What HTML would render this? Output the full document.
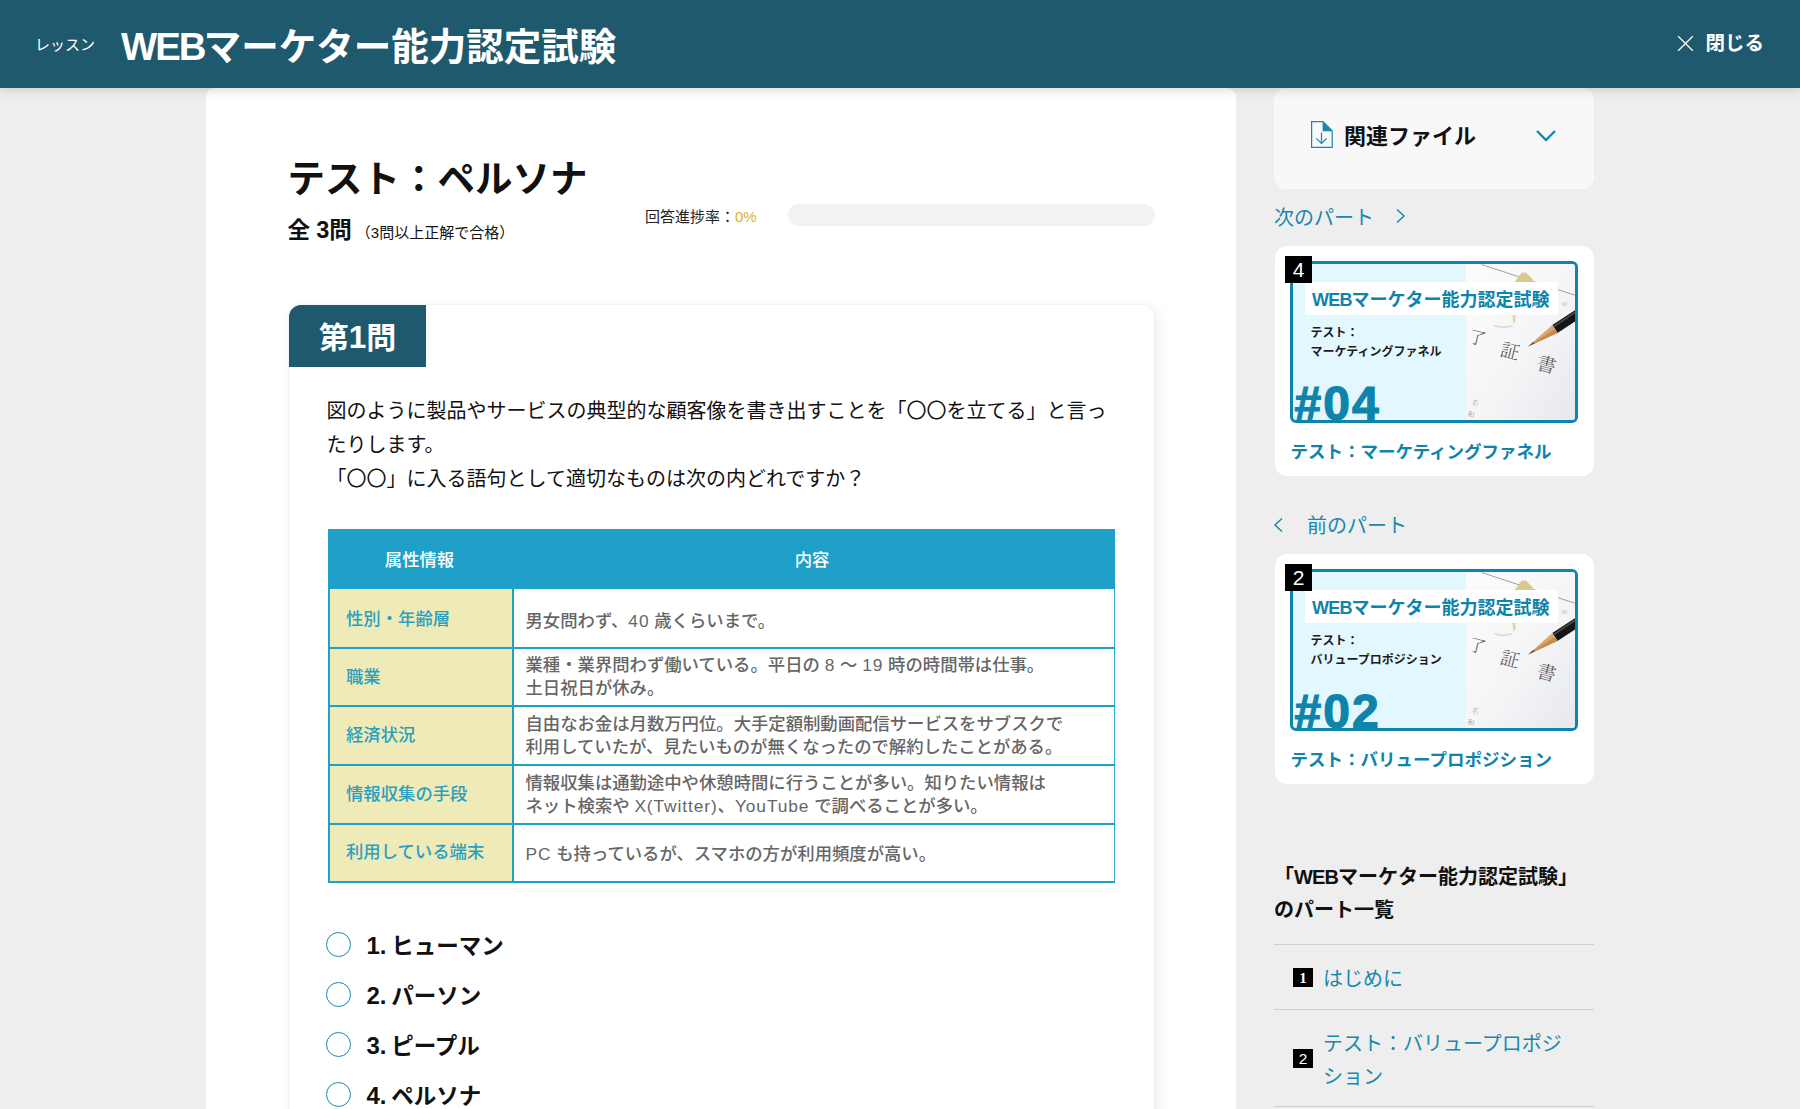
<!DOCTYPE html>
<html lang="ja">
<head>
<meta charset="utf-8">
<title>WEBマーケター能力認定試験</title>
<style>
*{box-sizing:border-box;margin:0;padding:0}
html,body{width:1800px;height:1109px;overflow:hidden}
body{background:#eeeeee;font-family:"Liberation Sans","Noto Sans CJK JP",sans-serif;color:#111;position:relative}
.abs{position:absolute}
/* header */
#hdr{position:absolute;left:0;top:0;width:1800px;height:88px;background:#1f596d;box-shadow:0 2px 10px rgba(0,0,0,.15);z-index:10}
#hdr .les{position:absolute;left:35px;top:34px;font-size:15px;line-height:22px;color:#fff}
#hdr .ttl{position:absolute;left:121px;top:19px;font-size:37.5px;line-height:56px;font-weight:700;color:#fff;white-space:nowrap}
#hdr .cls{position:absolute;left:1705.5px;top:28.5px;font-size:19.5px;line-height:28px;font-weight:700;color:#fff;white-space:nowrap}
#hdr svg.x{position:absolute;left:1677px;top:35px}
#hdr .web{font-size:38.4px;letter-spacing:-2px;margin-right:-.9px}
/* main card */
#main{position:absolute;left:206px;top:88px;width:1030px;height:1100px;background:#fff;border-radius:9px 9px 0 0}
#main h1{position:absolute;left:81.5px;top:62px;font-size:37.5px;line-height:58px;font-weight:700;color:#111;white-space:nowrap}
#main .cnt{position:absolute;left:81.5px;top:125px;font-size:22.5px;line-height:36px;font-weight:700;white-space:nowrap}
#main .cnt b.n{font-size:23.5px;line-height:0}
#main .cnt small{font-size:15px;font-weight:400;margin-left:4px;position:relative;top:-.5px}
#main .prog{position:absolute;left:439px;top:118px;font-size:15px;line-height:22px;white-space:nowrap;color:#222}
#main .prog b{font-weight:400;color:#e2b01f}
#main .bar{position:absolute;left:582px;top:116px;width:367px;height:22px;border-radius:11px;background:#f3f1f1}
/* question */
#q{position:absolute;left:83px;top:217px;width:865px;height:900px;background:#fff;border-radius:12px 12px 0 0;box-shadow:3px 3px 14px rgba(0,0,0,.09),0 0 0 1px rgba(0,0,0,.02)}
#q .lab{position:absolute;left:0;top:0;width:137px;height:62px;background:#1f596d;border-radius:12px 0 0 0;color:#fff;font-weight:700;font-size:30px;line-height:66px;text-align:center}
#q .txt{position:absolute;left:37.5px;top:88.5px;width:790px;font-size:20px;line-height:34px;color:#111}
#q .opt{position:absolute;left:37px;font-size:22.5px;line-height:36px;font-weight:700;white-space:nowrap}
#q .opt i{position:absolute;left:0;top:5px;width:25px;height:25px;border:1.4px solid #1888ad;border-radius:50%}
#q .opt b.n{font-size:24px;line-height:0}
#q .opt span{margin-left:40.5px;position:relative;top:1.5px;word-spacing:-1.6px}
/* table */
#tb{position:absolute;left:39px;top:224px;width:787px;height:354px;background:#fff}
#tb .h{position:absolute;left:0;top:0;width:787px;height:60px;background:#1fa0c8;color:#fff;font-weight:500;font-size:17.35px;line-height:63px}
#tb .r{position:absolute;left:0;width:787px;border-bottom:2px solid #1fa0c8;border-left:2px solid #1fa0c8;border-right:1.5px solid #3aabd0}
#tb .c1{position:absolute;left:0;top:0;width:184px;height:100%;background:#eeebb8;color:#2a9fc0;font-weight:500;font-size:17.35px;padding-left:16px;padding-bottom:2px;border-right:2px solid #1fa0c8;display:flex;align-items:center;white-space:nowrap}
#tb .c2 u{text-decoration:none;letter-spacing:.9px}
#tb .c2{position:absolute;left:184px;top:0;width:599px;height:100%;color:#666;font-weight:500;font-size:17.35px;line-height:23px;padding-left:11.5px;display:flex;align-items:center;white-space:nowrap}
/* sidebar */
#side{position:absolute;left:1274px;top:88px;width:320px}
.teal{color:#1888ad}

#rel{position:absolute;left:0;top:0;width:320px;height:100.5px;background:#f8f8f8;border-radius:12px}
#rel .t{position:absolute;left:70px;top:32px;font-size:22px;line-height:34px;font-weight:700;color:#111;white-space:nowrap}
#rel svg.f{position:absolute;left:36px;top:32px}
#rel svg.c{position:absolute;left:261px;top:40.5px}
.nav{position:absolute;left:0;font-size:20px;line-height:30px;color:#1888ad;white-space:nowrap}
.nav svg{position:absolute;top:8px}
.card{position:absolute;left:.5px;width:319px;height:230px;background:#fff;border-radius:12px}
.card .th{position:absolute;left:15.5px;top:15px;width:288px;height:162px;border:3px solid #0f84ab;border-radius:6px;overflow:hidden;background:#e3f7ff}
.card .th svg.ph{position:absolute;left:173px;top:0}
.card .th .wl{position:absolute;left:12px;top:17.5px;width:252.5px;height:33px;background:#fff;color:#0f84ab;font-weight:700;font-size:18px;line-height:36.5px;padding-left:7px;overflow:hidden;white-space:nowrap}
.card .th .wl span{letter-spacing:-.8px}
.card .th .sub{position:absolute;left:17.5px;top:59.5px;font-size:12px;line-height:19px;font-weight:700;color:#1c1c1c;white-space:nowrap}
.card .th .no{position:absolute;left:1.5px;top:110.4px;font-size:48px;line-height:60px;font-weight:700;color:#0f84ab;white-space:nowrap;letter-spacing:2px;-webkit-text-stroke:1.2px #0f84ab}
.card .bd{position:absolute;left:10.5px;top:10px;width:27px;height:27px;background:#000;color:#fff;font-size:21px;line-height:28.5px;text-align:center;font-weight:400}
.card .nm{position:absolute;left:16px;top:192px;font-size:17.5px;line-height:28px;font-weight:700;color:#0f84ab;white-space:nowrap}
#lst h3{position:absolute;left:0;top:773px;width:320px;font-size:20px;line-height:33px;font-weight:700;color:#111;white-space:nowrap}
#lst h3 span{letter-spacing:-.9px}
#lst .hr{position:absolute;left:0;width:320px;height:1px;background:#d0d0d0}
#lst .b{position:absolute;left:19px;width:20px;height:19.5px;background:#000;color:#fff;font-size:15px;line-height:20px;text-align:center;font-weight:700;font-family:"Liberation Serif","Noto Sans CJK JP",serif}
#lst .l{position:absolute;left:49px;width:250px;font-size:20px;line-height:33px;color:#1888ad}
</style>
</head>
<body>
<div id="hdr">
  <div class="les">レッスン</div>
  <div class="ttl"><span class="web">WEB</span>マーケター能力認定試験</div>
  <svg class="x" width="17" height="17" viewBox="0 0 17 17"><path d="M1.2 1.2L15.8 15.8M15.8 1.2L1.2 15.8" stroke="#fff" stroke-width="1.3" fill="none"/></svg>
  <div class="cls">閉じる</div>
</div>

<div id="main">
  <h1>テスト：ペルソナ</h1>
  <div class="cnt">全 <b class="n">3</b>問<small>（3問以上正解で合格）</small></div>
  <div class="prog">回答進捗率：<b>0%</b></div>
  <div class="bar"></div>

  <div id="q">
    <div class="lab">第<b style="font-size:31.5px;line-height:0">1</b>問</div>
    <div class="txt">図のように製品やサービスの典型的な顧客像を書き出すことを「〇〇を立てる」と言ったりします。<br>「〇〇」に入る語句として適切なものは次の内どれですか？</div>

    <div id="tb">
      <div class="h"><div style="position:absolute;left:0;width:183px;text-align:center">属性情報</div><div style="position:absolute;left:183px;width:602px;text-align:center">内容</div></div>
      <div class="r" style="top:60px;height:60px"><div class="c1">性別・年齢層</div><div class="c2"><span style="position:relative;top:3px">男女問わず、<u>40</u> 歳くらいまで。</span></div></div>
      <div class="r" style="top:120px;height:58px"><div class="c1" style="padding-bottom:4px">職業</div><div class="c2"><span style="position:relative;top:0px">業種・業界問わず働いている。平日の <u>8</u> ～ <u>19</u> 時の時間帯は仕事。<br>土日祝日が休み。</span></div></div>
      <div class="r" style="top:178px;height:59px"><div class="c1" style="padding-bottom:4px">経済状況</div><div class="c2"><span style="position:relative;top:.5px">自由なお金は月数万円位。大手定額制動画配信サービスをサブスクで<br>利用していたが、見たいものが無くなったので解約したことがある。</span></div></div>
      <div class="r" style="top:237px;height:59px"><div class="c1" style="padding-bottom:4px">情報収集の手段</div><div class="c2"><span style="position:relative;top:.5px">情報収集は通勤途中や休憩時間に行うことが多い。知りたい情報は<br>ネット検索や <u>X(Twitter)</u>、<u>YouTube</u> で調べることが多い。</span></div></div>
      <div class="r" style="top:296px;height:58px"><div class="c1" style="padding-bottom:5px">利用している端末</div><div class="c2"><span style="position:relative;top:1px"><u>PC</u> も持っているが、スマホの方が利用頻度が高い。</span></div></div>
    </div>

    <div class="opt" style="top:622px"><i></i><span><b class="n">1.</b> ヒューマン</span></div>
    <div class="opt" style="top:672px"><i></i><span><b class="n">2.</b> パーソン</span></div>
    <div class="opt" style="top:722px"><i></i><span><b class="n">3.</b> ピープル</span></div>
    <div class="opt" style="top:772px"><i></i><span><b class="n">4.</b> ペルソナ</span></div>
  </div>
</div>

<div id="side">
  <div id="rel">
    <svg class="f" width="24" height="30" viewBox="0 0 24 30"><path d="M1.6 1.6H13L22.2 10.8V27.4H1.6Z" fill="none" stroke="#1888ad" stroke-width="1.2" stroke-linejoin="miter"/><path d="M12.6 1.2V11.2H22.6Z" fill="#1888ad"/><path d="M11.5 12.5V23.3M6.3 18.3L11.5 23.5L16.7 18.3" fill="none" stroke="#1888ad" stroke-width="1.2"/></svg>
    <div class="t">関連ファイル</div>
    <svg class="c" width="22" height="14" viewBox="0 0 22 14"><path d="M2 2L11 11L20 2" fill="none" stroke="#1888ad" stroke-width="2.4"/></svg>
  </div>

  <div class="nav" style="top:114.5px">次のパート<svg style="left:121px;top:5.5px" width="12" height="16" viewBox="0 0 12 16"><path d="M2 1.5L9 8L2 14.5" fill="none" stroke="#1888ad" stroke-width="1.5"/></svg></div>

  <div class="card" style="top:158px">
    <div class="th">
      <svg class="ph" width="110" height="156" viewBox="0 0 110 156">
        <linearGradient id="pg1" x1="0" y1="0" x2="1" y2="1"><stop offset="0" stop-color="#fcfcfc"/><stop offset=".55" stop-color="#f5f5f7"/><stop offset="1" stop-color="#e6e8ed"/></linearGradient>
        <rect width="110" height="156" fill="url(#pg1)"/>
        <path d="M15.6 .5L108.7 31.2" stroke="#8a8a8a" stroke-width=".8"/>
        <path d="M48.7 18L55.8 8.6L60 8.8L67 15.5V18Z" fill="#dcc88e"/>
        <path d="M26.6 50H49.5V57L46 62.5Q37 65.5 28.5 62.5Q26 58 26.6 50Z" fill="#f7f7f3"/>
        <path d="M28.5 62.5Q37 65.8 46 62.5L47 60.8Q37 63.6 27.8 60.8Z" fill="#dddcd6"/>
        <path d="M46.3 50H49.5V57L47.5 60Z" fill="#e3d3a2"/>
        <path d="M91.5 69L86.3 61L118.1 40.2L123.3 48.2Z" fill="#151515"/>
        <path d="M88.2 63.2L87.2 61.7L119 40.9L120 42.4Z" fill="#4a4a4a"/>
        <path d="M62.1 82.5L86.3 61L91.5 69Z" fill="#dca56c"/>
        <path d="M62.1 82.5L88.9 65L91.5 69Z" fill="#c68a52"/>
        <path d="M62.1 82.5L67.4 77.8L68.6 79.6Z" fill="#555"/>
        <g font-family="'Liberation Serif','Noto Serif CJK SC',serif" fill="#555" font-weight="300">
          <text x="11" y="80" font-size="17" text-anchor="middle" transform="rotate(14 11 75)">了</text>
          <text x="44" y="94" font-size="19" text-anchor="middle" transform="rotate(14 44 88)">証</text>
          <text x="80.6" y="107.5" font-size="19" text-anchor="middle" transform="rotate(14 80.6 101)">書</text>
          <text x="98.4" y="42" font-size="6" text-anchor="middle" fill="#9a9a9a" transform="rotate(14 98.4 40)">の</text>
          <text x="9.2" y="141.5" font-size="7" text-anchor="middle" fill="#8a8a8a" transform="rotate(14 9.2 139)">名</text>
          <text x="5" y="153" font-size="7" text-anchor="middle" fill="#8a8a8a" transform="rotate(14 5 150.5)">和</text>
        </g>
      </svg>
      <div class="wl"><span>WEB</span>マーケター能力認定試験</div>
      <div class="sub">テスト：<br>マーケティングファネル</div>
      <div class="no">#04</div>
    </div>
    <div class="bd">4</div>
    <div class="nm">テスト：マーケティングファネル</div>
  </div>

  <div class="nav" style="top:423px"><svg style="left:-1px;top:5.5px" width="12" height="16" viewBox="0 0 12 16"><path d="M9 1.5L2 8L9 14.5" fill="none" stroke="#1888ad" stroke-width="1.5"/></svg><span style="margin-left:33px">前のパート</span></div>

  <div class="card" style="top:466px">
    <div class="th">
      <svg class="ph" width="110" height="156" viewBox="0 0 110 156">
        <linearGradient id="pg2" x1="0" y1="0" x2="1" y2="1"><stop offset="0" stop-color="#fcfcfc"/><stop offset=".55" stop-color="#f5f5f7"/><stop offset="1" stop-color="#e6e8ed"/></linearGradient>
        <rect width="110" height="156" fill="url(#pg2)"/>
        <path d="M15.6 .5L108.7 31.2" stroke="#8a8a8a" stroke-width=".8"/>
        <path d="M48.7 18L55.8 8.6L60 8.8L67 15.5V18Z" fill="#dcc88e"/>
        <path d="M26.6 50H49.5V57L46 62.5Q37 65.5 28.5 62.5Q26 58 26.6 50Z" fill="#f7f7f3"/>
        <path d="M28.5 62.5Q37 65.8 46 62.5L47 60.8Q37 63.6 27.8 60.8Z" fill="#dddcd6"/>
        <path d="M46.3 50H49.5V57L47.5 60Z" fill="#e3d3a2"/>
        <path d="M91.5 69L86.3 61L118.1 40.2L123.3 48.2Z" fill="#151515"/>
        <path d="M88.2 63.2L87.2 61.7L119 40.9L120 42.4Z" fill="#4a4a4a"/>
        <path d="M62.1 82.5L86.3 61L91.5 69Z" fill="#dca56c"/>
        <path d="M62.1 82.5L88.9 65L91.5 69Z" fill="#c68a52"/>
        <path d="M62.1 82.5L67.4 77.8L68.6 79.6Z" fill="#555"/>
        <g font-family="'Liberation Serif','Noto Serif CJK SC',serif" fill="#555" font-weight="300">
          <text x="11" y="80" font-size="17" text-anchor="middle" transform="rotate(14 11 75)">了</text>
          <text x="44" y="94" font-size="19" text-anchor="middle" transform="rotate(14 44 88)">証</text>
          <text x="80.6" y="107.5" font-size="19" text-anchor="middle" transform="rotate(14 80.6 101)">書</text>
          <text x="98.4" y="42" font-size="6" text-anchor="middle" fill="#9a9a9a" transform="rotate(14 98.4 40)">の</text>
          <text x="9.2" y="141.5" font-size="7" text-anchor="middle" fill="#8a8a8a" transform="rotate(14 9.2 139)">名</text>
          <text x="5" y="153" font-size="7" text-anchor="middle" fill="#8a8a8a" transform="rotate(14 5 150.5)">和</text>
        </g>
      </svg>
      <div class="wl"><span>WEB</span>マーケター能力認定試験</div>
      <div class="sub">テスト：<br>バリュープロポジション</div>
      <div class="no">#02</div>
    </div>
    <div class="bd">2</div>
    <div class="nm">テスト：バリュープロポジション</div>
  </div>

  <div id="lst">
    <h3>「<span>WEB</span>マーケター能力認定試験」<br>のパート一覧</h3>
    <div class="hr" style="top:856px"></div>
    <div class="b" style="top:879.5px">1</div><div class="l" style="top:874.5px">はじめに</div>
    <div class="hr" style="top:921px"></div>
    <div class="b" style="top:960.5px;font-family:'Liberation Sans',sans-serif;font-size:15.5px;font-weight:400">2</div><div class="l" style="top:940px">テスト：バリュープロポジション</div>
    <div class="hr" style="top:1018px"></div>
  </div>
</div>
</body>
</html>
